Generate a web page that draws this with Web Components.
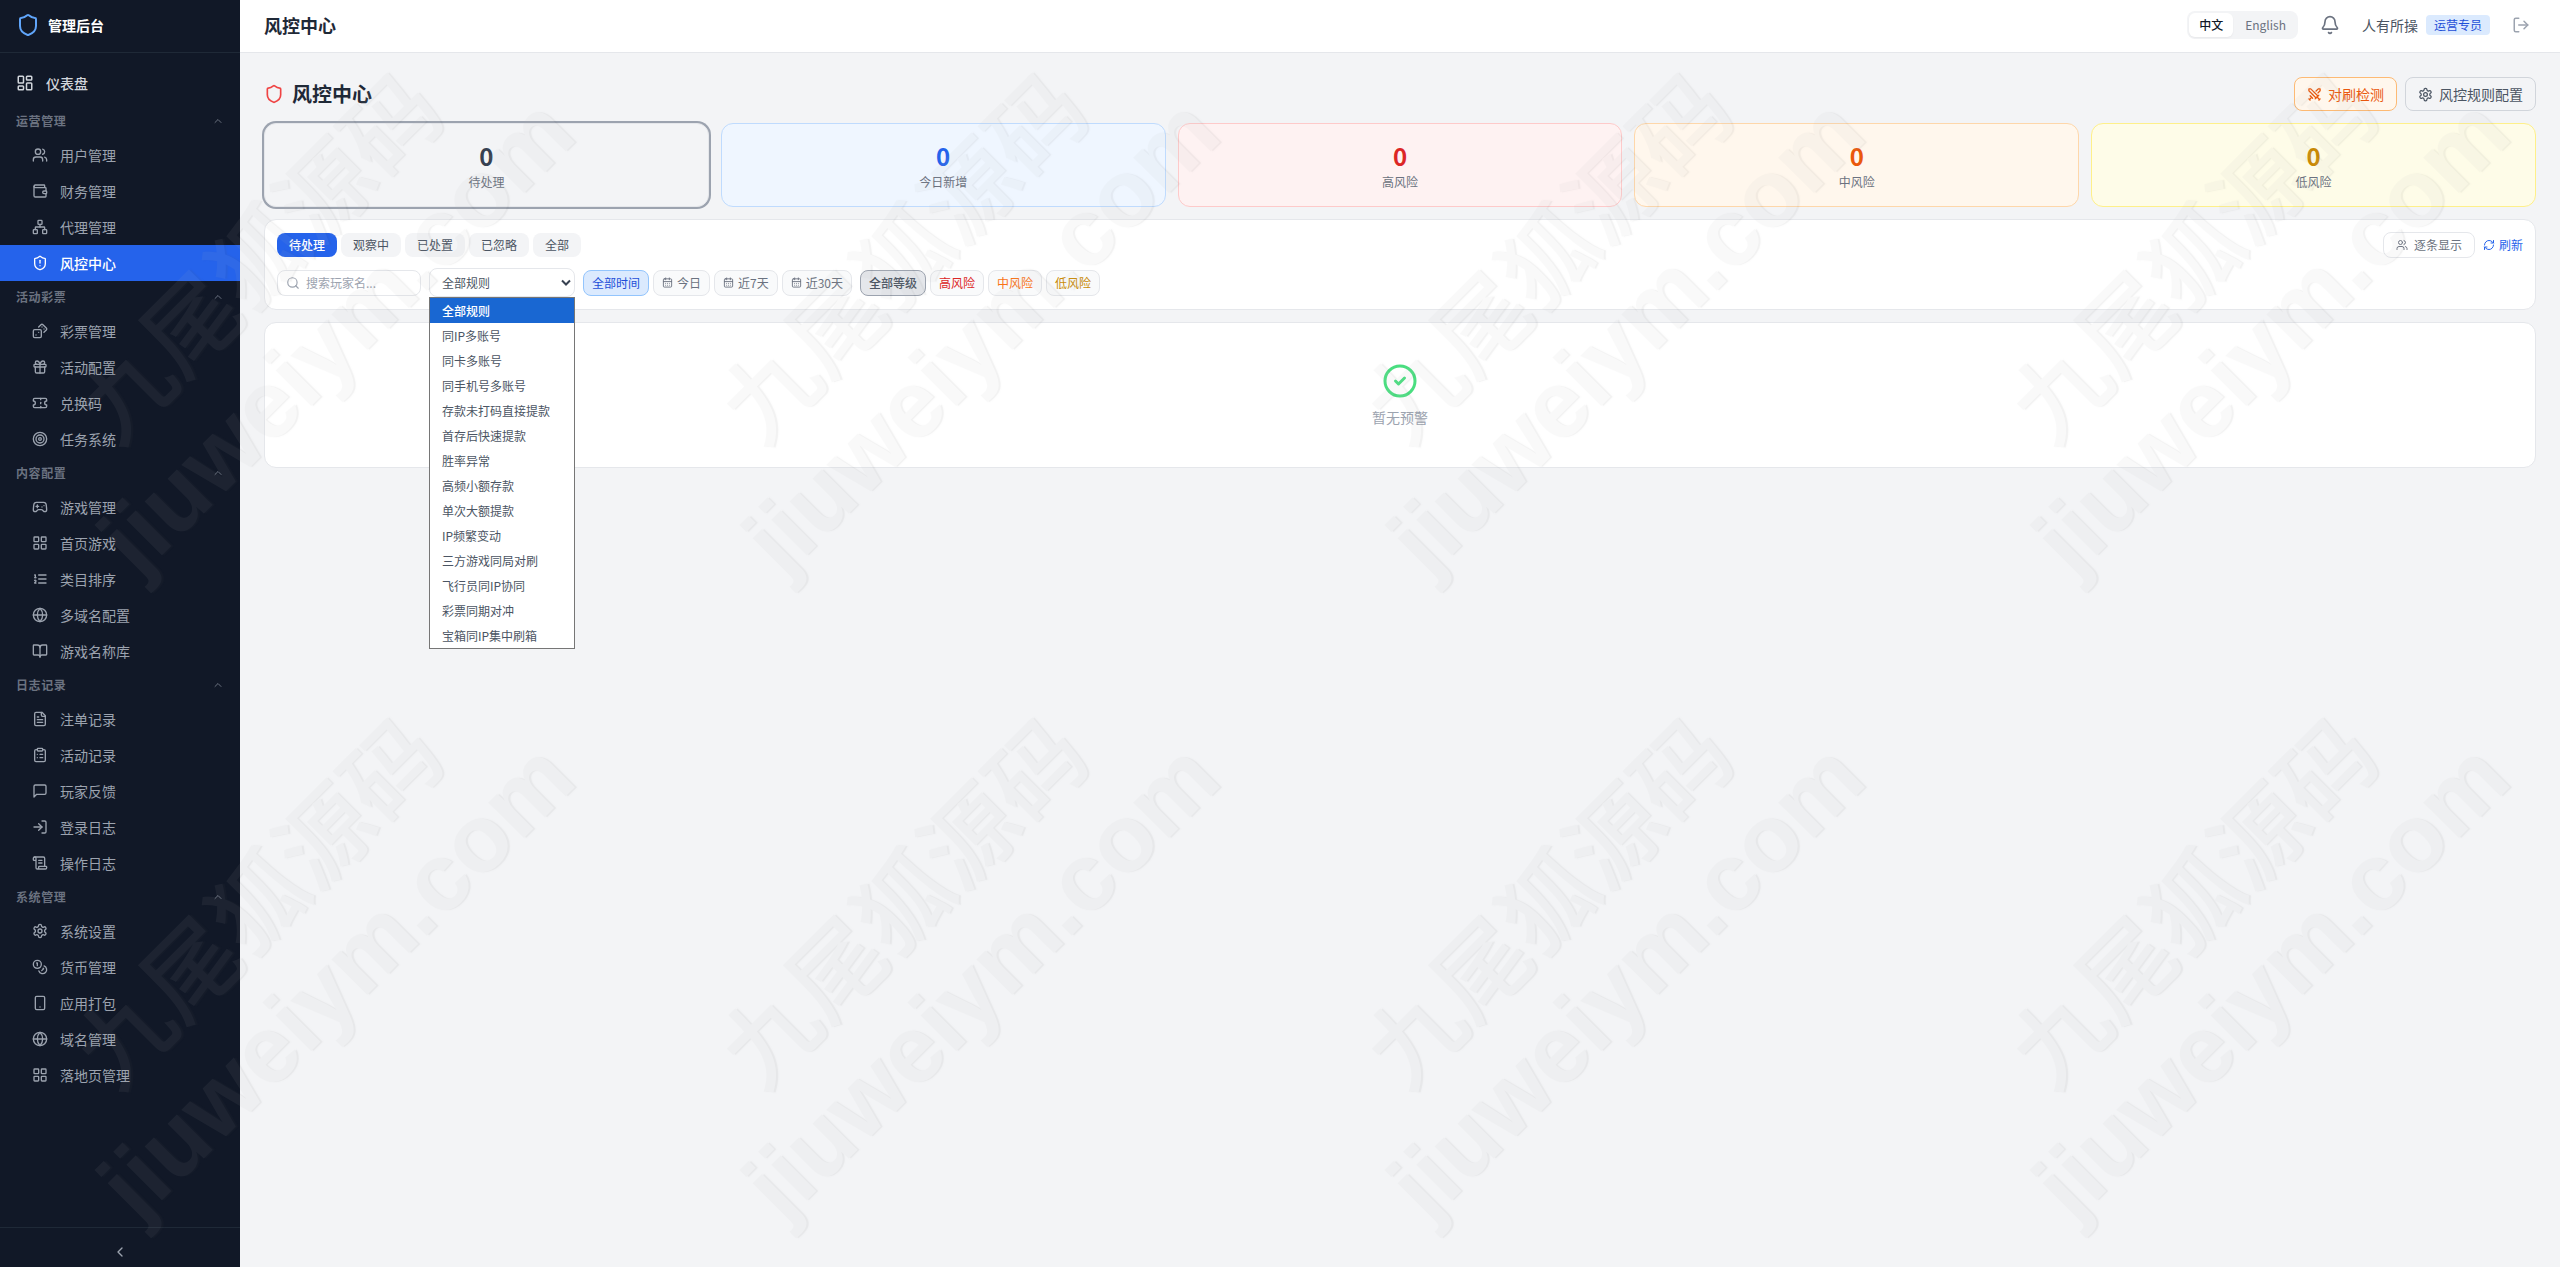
<!DOCTYPE html>
<html lang="zh-CN">
<head>
<meta charset="UTF-8">
<title>风控中心</title>
<style>
  html, body {
    margin: 0;
    height: 100%;
    overflow: hidden;
  }
  body {
    font-family: "Noto Sans CJK SC", sans-serif;
    font-size: 14px;
    line-height: 20px;
    color: #1f2937;
    background: #f3f4f6;
  }
</style>
</head>
<body>
<admin-app></admin-app>

<script>
const ICONS = {
  shield: '<path d="M20 13c0 5-3.5 7.5-7.66 8.95a1 1 0 0 1-.67-.01C7.5 20.5 4 18 4 13V6a1 1 0 0 1 1-1c2 0 4.5-1.2 6.24-2.72a1.17 1.17 0 0 1 1.52 0C14.51 3.81 17 5 19 5a1 1 0 0 1 1 1z"/>',
  shieldAlert: '<path d="M20 13c0 5-3.5 7.5-7.66 8.95a1 1 0 0 1-.67-.01C7.5 20.5 4 18 4 13V6a1 1 0 0 1 1-1c2 0 4.5-1.2 6.24-2.72a1.17 1.17 0 0 1 1.52 0C14.51 3.81 17 5 19 5a1 1 0 0 1 1 1z"/><path d="M12 8v4"/><path d="M12 16h.01"/>',
  dashboard: '<rect width="7" height="9" x="3" y="3" rx="1"/><rect width="7" height="5" x="14" y="3" rx="1"/><rect width="7" height="9" x="14" y="12" rx="1"/><rect width="7" height="5" x="3" y="16" rx="1"/>',
  users: '<path d="M16 21v-2a4 4 0 0 0-4-4H6a4 4 0 0 0-4 4v2"/><circle cx="9" cy="7" r="4"/><path d="M22 21v-2a4 4 0 0 0-3-3.87"/><path d="M16 3.13a4 4 0 0 1 0 7.75"/>',
  wallet: '<path d="M19 7V4a1 1 0 0 0-1-1H5a2 2 0 0 0 0 4h15a1 1 0 0 1 1 1v4h-3a2 2 0 0 0 0 4h3a1 1 0 0 0 1-1v-2a1 1 0 0 0-1-1"/><path d="M3 5v14a2 2 0 0 0 2 2h15a1 1 0 0 0 1-1v-4"/>',
  network: '<rect x="16" y="16" width="6" height="6" rx="1"/><rect x="2" y="16" width="6" height="6" rx="1"/><rect x="9" y="2" width="6" height="6" rx="1"/><path d="M5 16v-3a1 1 0 0 1 1-1h12a1 1 0 0 1 1 1v3"/><path d="M12 12V8"/>',
  dices: '<rect width="12" height="12" x="2" y="10" rx="2" ry="2"/><path d="m17.92 14 3.5-3.5a2.24 2.24 0 0 0 0-3l-5-4.92a2.24 2.24 0 0 0-3 0L10 6"/><path d="M6 18h.01"/><path d="M10 14h.01"/><path d="M15 6h.01"/><path d="M18 9h.01"/>',
  gift: '<rect x="3" y="8" width="18" height="4" rx="1"/><path d="M12 8v13"/><path d="M19 12v7a2 2 0 0 1-2 2H7a2 2 0 0 1-2-2v-7"/><path d="M7.5 8a2.5 2.5 0 0 1 0-5A4.8 8 0 0 1 12 8a4.8 8 0 0 1 4.5-5 2.5 2.5 0 0 1 0 5"/>',
  ticket: '<path d="M2 9a3 3 0 0 1 0 6v2a2 2 0 0 0 2 2h16a2 2 0 0 0 2-2v-2a3 3 0 0 1 0-6V7a2 2 0 0 0-2-2H4a2 2 0 0 0-2 2Z"/><path d="M13 5v2"/><path d="M13 17v2"/><path d="M13 11v2"/>',
  target: '<circle cx="12" cy="12" r="10"/><circle cx="12" cy="12" r="6"/><circle cx="12" cy="12" r="2"/>',
  gamepad: '<path d="M6 11h4"/><path d="M8 9v4"/><path d="M15 12h.01"/><path d="M18 10h.01"/><path d="M17.32 5H6.68a4 4 0 0 0-3.978 3.59c-.006.052-.01.101-.017.152C2.604 9.416 2 14.456 2 16a3 3 0 0 0 3 3c1 0 1.5-.5 2-1l1.414-1.414A2 2 0 0 1 9.828 16h4.344a2 2 0 0 1 1.414.586L17 18c.5.5 1 1 2 1a3 3 0 0 0 3-3c0-1.545-.604-6.584-.685-7.258-.007-.05-.011-.1-.017-.151A4 4 0 0 0 17.32 5z"/>',
  grid: '<rect width="7" height="7" x="3" y="3" rx="1"/><rect width="7" height="7" x="14" y="3" rx="1"/><rect width="7" height="7" x="14" y="14" rx="1"/><rect width="7" height="7" x="3" y="14" rx="1"/>',
  listOrdered: '<path d="M10 12h11"/><path d="M10 18h11"/><path d="M10 6h11"/><path d="M4 10h2"/><path d="M4 6h1v4"/><path d="M6 18H4c0-1 2-2 2-3s-1-1.5-2-1"/>',
  globe: '<circle cx="12" cy="12" r="10"/><path d="M12 2a14.5 14.5 0 0 0 0 20 14.5 14.5 0 0 0 0-20"/><path d="M2 12h20"/>',
  book: '<path d="M12 7v14"/><path d="M3 18a1 1 0 0 1-1-1V4a1 1 0 0 1 1-1h5a4 4 0 0 1 4 4 4 4 0 0 1 4-4h5a1 1 0 0 1 1 1v13a1 1 0 0 1-1 1h-6a3 3 0 0 0-3 3 3 3 0 0 0-3-3z"/>',
  fileText: '<path d="M15 2H6a2 2 0 0 0-2 2v16a2 2 0 0 0 2 2h12a2 2 0 0 0 2-2V7Z"/><path d="M14 2v4a2 2 0 0 0 2 2h4"/><path d="M10 9H8"/><path d="M16 13H8"/><path d="M16 17H8"/>',
  clipboard: '<rect width="8" height="4" x="8" y="2" rx="1" ry="1"/><path d="M16 4h2a2 2 0 0 1 2 2v14a2 2 0 0 1-2 2H6a2 2 0 0 1-2-2V6a2 2 0 0 1 2-2h2"/><path d="M12 11h4"/><path d="M12 16h4"/><path d="M8 11h.01"/><path d="M8 16h.01"/>',
  message: '<path d="M21 15a2 2 0 0 1-2 2H7l-4 4V5a2 2 0 0 1 2-2h14a2 2 0 0 1 2 2z"/>',
  logIn: '<path d="M15 3h4a2 2 0 0 1 2 2v14a2 2 0 0 1-2 2h-4"/><path d="m10 17 5-5-5-5"/><path d="M15 12H3"/>',
  logOut: '<path d="M9 21H5a2 2 0 0 1-2-2V5a2 2 0 0 1 2-2h4"/><path d="m16 17 5-5-5-5"/><path d="M21 12H9"/>',
  scroll: '<path d="M15 12h-5"/><path d="M15 8h-5"/><path d="M19 17V5a2 2 0 0 0-2-2H4"/><path d="M8 21h12a2 2 0 0 0 2-2v-1a1 1 0 0 0-1-1H11a1 1 0 0 0-1 1v1a2 2 0 1 1-4 0V5a2 2 0 1 0-4 0v2a1 1 0 0 0 1 1h3"/>',
  settings: '<path d="M12.22 2h-.44a2 2 0 0 0-2 2v.18a2 2 0 0 1-1 1.73l-.43.25a2 2 0 0 1-2 0l-.15-.08a2 2 0 0 0-2.73.73l-.22.38a2 2 0 0 0 .73 2.73l.15.1a2 2 0 0 1 1 1.72v.51a2 2 0 0 1-1 1.74l-.15.09a2 2 0 0 0-.73 2.73l.22.38a2 2 0 0 0 2.73.73l.15-.08a2 2 0 0 1 2 0l.43.25a2 2 0 0 1 1 1.73V20a2 2 0 0 0 2 2h.44a2 2 0 0 0 2-2v-.18a2 2 0 0 1 1-1.73l.43-.25a2 2 0 0 1 2 0l.15.08a2 2 0 0 0 2.73-.73l.22-.39a2 2 0 0 0-.73-2.73l-.15-.08a2 2 0 0 1-1-1.74v-.5a2 2 0 0 1 1-1.74l.15-.09a2 2 0 0 0 .73-2.73l-.22-.38a2 2 0 0 0-2.73-.73l-.15.08a2 2 0 0 1-2 0l-.43-.25a2 2 0 0 1-1-1.73V4a2 2 0 0 0-2-2z"/><circle cx="12" cy="12" r="3"/>',
  coins: '<circle cx="8" cy="8" r="6"/><path d="M18.09 10.37A6 6 0 1 1 10.34 18"/><path d="M7 6h1v4"/><path d="m16.71 13.88.7.71-2.82 2.82"/>',
  phone: '<rect width="14" height="20" x="5" y="2" rx="2" ry="2"/><path d="M12 18h.01"/>',
  chevronUp: '<path d="m18 15-6-6-6 6"/>',
  chevronLeft: '<path d="m15 18-6-6 6-6"/>',
  bell: '<path d="M10.268 21a2 2 0 0 0 3.464 0"/><path d="M3.262 15.326A1 1 0 0 0 4 17h16a1 1 0 0 0 .74-1.673C19.41 13.956 18 12.499 18 8A6 6 0 0 0 6 8c0 4.499-1.411 5.956-2.738 7.326"/>',
  swords: '<polyline points="14.5 17.5 3 6 3 3 6 3 17.5 14.5"/><line x1="13" x2="19" y1="19" y2="13"/><line x1="16" x2="20" y1="16" y2="20"/><line x1="19" x2="21" y1="21" y2="19"/><polyline points="14.5 6.5 18 3 21 3 21 6 17.5 9.5"/><line x1="5" x2="9" y1="14" y2="18"/><line x1="7" x2="4" y1="17" y2="20"/><line x1="3" x2="5" y1="19" y2="21"/>',
  search: '<circle cx="11" cy="11" r="8"/><path d="m21 21-4.3-4.3"/>',
  calendar: '<path d="M8 2v4"/><path d="M16 2v4"/><rect width="18" height="18" x="3" y="4" rx="2"/><path d="M3 10h18"/><path d="M8 14h.01"/><path d="M12 14h.01"/><path d="M16 14h.01"/><path d="M8 18h.01"/><path d="M12 18h.01"/><path d="M16 18h.01"/>',
  refresh: '<path d="M3 12a9 9 0 0 1 9-9 9.75 9.75 0 0 1 6.74 2.74L21 8"/><path d="M21 3v5h-5"/><path d="M21 12a9 9 0 0 1-9 9 9.75 9.75 0 0 1-6.74-2.74L3 16"/><path d="M8 16H3v5"/>',
  circleCheck: '<circle cx="12" cy="12" r="10"/><path d="m9 12 2 2 4-4"/>',
};

class UiIcon extends HTMLElement {
  constructor() {
    super();
    this.attachShadow({ mode: 'open' });
  }

  connectedCallback() {
    const size = this.getAttribute('size') || 16;
    this.shadowRoot.innerHTML = `
      <style>
        :host { display: block; flex: none; width: ${size}px; height: ${size}px; }
        svg { display: block; }
      </style>
      <svg width="${size}" height="${size}" viewBox="0 0 24 24" fill="none" stroke="currentColor"
        stroke-width="2" stroke-linecap="round" stroke-linejoin="round">${ICONS[this.getAttribute('name')]}</svg>
    `;
  }
}
customElements.define('ui-icon', UiIcon);

// Most elements only need their markup cloned into a shadow root
function define(name, html) {
  const template = document.createElement('template');
  template.innerHTML = html;
  customElements.define(name, class extends HTMLElement {
    constructor() {
      super();
      this.attachShadow({ mode: 'open' });
      this.shadowRoot.appendChild(template.content.cloneNode(true));
    }
  });
}

class NavItem extends HTMLElement {
  constructor() {
    super();
    this.attachShadow({ mode: 'open' });
  }

  connectedCallback() {
    this.shadowRoot.innerHTML = `
      <style>
        :host {
          display: flex;
          align-items: center;
          gap: 12px;
          padding: 8px 16px 8px 32px;
          color: #9ca3af;
        }
        :host([top]) { padding: 12px 16px; color: #d1d5db; font-weight: 500; }
        :host([active]) { background: #2563eb; color: #fff; font-weight: 500; }
      </style>
      <ui-icon name="${this.getAttribute('icon')}" size="${this.hasAttribute('top') ? 18 : 16}"></ui-icon>
      <slot></slot>
    `;
  }
}
customElements.define('nav-item', NavItem);

class NavGroup extends HTMLElement {
  constructor() {
    super();
    this.attachShadow({ mode: 'open' });
  }

  connectedCallback() {
    this.shadowRoot.innerHTML = `
      <style>
        :host { display: block; }
        .title {
          display: flex;
          align-items: center;
          justify-content: space-between;
          padding: 8px 16px;
          font-size: 12px;
          line-height: 16px;
          font-weight: 600;
          letter-spacing: 0.05em;
          color: #6b7280;
        }
      </style>
      <div class="title"><span>${this.getAttribute('label')}</span><ui-icon name="chevronUp" size="12"></ui-icon></div>
      <slot></slot>
    `;
  }
}
customElements.define('nav-group', NavGroup);

define('side-bar', `
  <style>
    :host {
      display: flex;
      flex-direction: column;
      width: 240px;
      flex: none;
      background: #111827;
    }
    .brand {
      display: flex;
      align-items: center;
      gap: 8px;
      height: 50px;
      padding: 0 16px 2px;
      border-bottom: 1px solid #1f2937;
      color: #fff;
      font-weight: 700;
    }
    .brand ui-icon { color: #60a5fa; }
    nav { flex: 1; padding-top: 8px; }
    footer {
      display: flex;
      justify-content: center;
      padding: 16px 0 7px;
      border-top: 1px solid #1f2937;
      color: #9ca3af;
    }
  </style>
  <div class="brand"><ui-icon name="shield" size="24"></ui-icon><span>管理后台</span></div>
  <nav>
    <nav-item top icon="dashboard">仪表盘</nav-item>
    <nav-group label="运营管理">
      <nav-item icon="users">用户管理</nav-item>
      <nav-item icon="wallet">财务管理</nav-item>
      <nav-item icon="network">代理管理</nav-item>
      <nav-item icon="shieldAlert" active>风控中心</nav-item>
    </nav-group>
    <nav-group label="活动彩票">
      <nav-item icon="dices">彩票管理</nav-item>
      <nav-item icon="gift">活动配置</nav-item>
      <nav-item icon="ticket">兑换码</nav-item>
      <nav-item icon="target">任务系统</nav-item>
    </nav-group>
    <nav-group label="内容配置">
      <nav-item icon="gamepad">游戏管理</nav-item>
      <nav-item icon="grid">首页游戏</nav-item>
      <nav-item icon="listOrdered">类目排序</nav-item>
      <nav-item icon="globe">多域名配置</nav-item>
      <nav-item icon="book">游戏名称库</nav-item>
    </nav-group>
    <nav-group label="日志记录">
      <nav-item icon="fileText">注单记录</nav-item>
      <nav-item icon="clipboard">活动记录</nav-item>
      <nav-item icon="message">玩家反馈</nav-item>
      <nav-item icon="logIn">登录日志</nav-item>
      <nav-item icon="scroll">操作日志</nav-item>
    </nav-group>
    <nav-group label="系统管理">
      <nav-item icon="settings">系统设置</nav-item>
      <nav-item icon="coins">货币管理</nav-item>
      <nav-item icon="phone">应用打包</nav-item>
      <nav-item icon="globe">域名管理</nav-item>
      <nav-item icon="grid">落地页管理</nav-item>
    </nav-group>
  </nav>
  <footer><ui-icon name="chevronLeft" size="16"></ui-icon></footer>
`);

define('top-bar', `
  <style>
    :host {
      display: flex;
      align-items: center;
      justify-content: space-between;
      height: 50px;
      padding: 0 24px 2px;
      background: #fff;
      border-bottom: 1px solid #e5e7eb;
    }
    h2 { margin: 0; font-size: 18px; line-height: 28px; font-weight: 600; }
    .right, .user { display: flex; align-items: center; }
    .right { gap: 16px; }
    .user { gap: 8px; color: #4b5563; }
    .lang {
      display: flex;
      gap: 2px;
      padding: 2px;
      border-radius: 8px;
      background: #f3f4f6;
      font-size: 12px;
      line-height: 16px;
      color: #6b7280;
    }
    .lang span { padding: 4px 10px; border-radius: 6px; }
    .lang .on {
      background: #fff;
      color: #111827;
      font-weight: 500;
      box-shadow: 0 1px 2px rgba(0, 0, 0, .05);
    }
    .btn { padding: 6px; color: #6b7280; }
    .btn.out { color: #9ca3af; }
    .role {
      padding: 2px 8px;
      border-radius: 4px;
      background: #dbeafe;
      color: #1d4ed8;
      font-size: 12px;
      line-height: 16px;
    }
  </style>
  <h2>风控中心</h2>
  <div class="right">
    <div class="lang"><span class="on">中文</span><span>English</span></div>
    <div class="btn"><ui-icon name="bell" size="20"></ui-icon></div>
    <div class="user"><span>人有所操</span><span class="role">运营专员</span></div>
    <div class="btn out"><ui-icon name="logOut" size="18"></ui-icon></div>
  </div>
`);

define('stat-card', `
  <style>
    :host {
      display: block;
      padding: 16px;
      border: 1px solid var(--line);
      border-radius: 12px;
      background: var(--bg);
      text-align: center;
    }
    :host([selected]) { box-shadow: 0 0 0 2px #9ca3af; }
    .num { font-size: 24px; line-height: 32px; font-weight: 700; color: var(--fg); }
    .label { margin-top: 2px; font-size: 12px; line-height: 16px; color: #6b7280; }
  </style>
  <div class="num"><slot name="value"></slot></div>
  <div class="label"><slot></slot></div>
`);

define('tab-pill', `
  <style>
    :host {
      display: block;
      padding: 4px 12px;
      border-radius: 8px;
      background: #f3f4f6;
      color: #4b5563;
      font-size: 12px;
      line-height: 16px;
    }
    :host([active]) { background: #2563eb; color: #fff; font-weight: 500; }
  </style>
  <slot></slot>
`);

define('filter-chip', `
  <style>
    :host {
      display: flex;
      align-items: center;
      gap: 4px;
      padding: 4px 8px;
      border: 1px solid #e5e7eb;
      border-radius: 8px;
      background: #f9fafb;
      color: #6b7280;
      font-size: 12px;
      line-height: 16px;
    }
    :host([tone="blue"]) { background: #dbeafe; border-color: #93c5fd; color: #1d4ed8; }
    :host([tone="gray"]) { background: #e5e7eb; border-color: #9ca3af; color: #4b5563; font-weight: 500; }
    :host([tone="red"]) { color: #dc2626; }
    :host([tone="orange"]) { color: #f97316; }
    :host([tone="yellow"]) { color: #ca8a04; }
  </style>
  <slot></slot>
`);

class RuleSelect extends HTMLElement {
  constructor() {
    super();
    this.attachShadow({ mode: 'open' });
  }

  connectedCallback() {
    const options = this.getAttribute('options').split(',');
    this.shadowRoot.innerHTML = `
      <style>
        :host {
          position: relative;
          display: block;
          box-sizing: border-box;
          width: 146px;
          height: 29px;
          font-size: 12px;
          line-height: 27px;
          color: #4b5563;
          border: 1px solid #e5e7eb;
          border-radius: 8px;
          background: #fff;
        }
        .field { display: flex; align-items: center; justify-content: space-between; padding: 0 3px 0 12px; }
        .list {
          position: absolute;
          z-index: 5;
          top: 28px;
          left: -1px;
          width: 144px;
          border: 1px solid #767676;
          background: #fff;
        }
        .option { height: 25px; line-height: 25px; padding-left: 12px; }
        .option.on { background: #1967d2; color: #fff; font-weight: 500; }
      </style>
      <div class="field">
        <span>${options[0]}</span>
        <svg width="10" height="8" viewBox="0 0 10 8" fill="none" stroke="#374151" stroke-width="2"><path d="M1 1.5 5 5.5 9 1.5"/></svg>
      </div>
      <div class="list">
        ${options.map((o, i) => `<div class="option${i === 0 ? ' on' : ''}">${o}</div>`).join('')}
      </div>
    `;
  }
}
customElements.define('rule-select', RuleSelect);

define('filter-panel', `
  <style>
    :host {
      display: flex;
      flex-direction: column;
      gap: 10px;
      padding: 12px;
      border: 1px solid #e5e7eb;
      border-radius: 12px;
      background: #fff;
      font-size: 12px;
      line-height: 16px;
    }
    .row, .set, .tools, .refresh, .mode, .search { display: flex; align-items: center; }
    .row { gap: 8px; }
    .between { justify-content: space-between; }
    .set { gap: 4px; }
    .tools { gap: 8px; }
    .mode {
      gap: 6px;
      padding: 4px 12px;
      border: 1px solid #e5e7eb;
      border-radius: 8px;
      color: #6b7280;
    }
    .refresh { gap: 4px; color: #2563eb; }
    .search {
      box-sizing: border-box;
      width: 144px;
      gap: 6px;
      padding: 4px 8px;
      border: 1px solid #e5e7eb;
      border-radius: 8px;
      color: #9ca3af;
    }
  </style>
  <div class="row between">
    <div class="set">
      <tab-pill active>待处理</tab-pill>
      <tab-pill>观察中</tab-pill>
      <tab-pill>已处置</tab-pill>
      <tab-pill>已忽略</tab-pill>
      <tab-pill>全部</tab-pill>
    </div>
    <div class="tools">
      <div class="mode"><ui-icon name="users" size="12"></ui-icon><span>逐条显示</span></div>
      <div class="refresh"><ui-icon name="refresh" size="12"></ui-icon><span>刷新</span></div>
    </div>
  </div>
  <div class="row">
    <div class="search"><ui-icon name="search" size="14"></ui-icon><span>搜索玩家名...</span></div>
    <rule-select options="全部规则,同IP多账号,同卡多账号,同手机号多账号,存款未打码直接提款,首存后快速提款,胜率异常,高频小额存款,单次大额提款,IP频繁变动,三方游戏同局对刷,飞行员同IP协同,彩票同期对冲,宝箱同IP集中刷箱"></rule-select>
    <div class="set">
      <filter-chip tone="blue">全部时间</filter-chip>
      <filter-chip><ui-icon name="calendar" size="11"></ui-icon><span>今日</span></filter-chip>
      <filter-chip><ui-icon name="calendar" size="11"></ui-icon><span>近7天</span></filter-chip>
      <filter-chip><ui-icon name="calendar" size="11"></ui-icon><span>近30天</span></filter-chip>
    </div>
    <div class="set">
      <filter-chip tone="gray">全部等级</filter-chip>
      <filter-chip tone="red">高风险</filter-chip>
      <filter-chip tone="orange">中风险</filter-chip>
      <filter-chip tone="yellow">低风险</filter-chip>
    </div>
  </div>
`);

define('empty-state', `
  <style>
    :host {
      display: flex;
      flex-direction: column;
      align-items: center;
      gap: 8px;
      padding: 40px;
      border: 1px solid #e5e7eb;
      border-radius: 12px;
      background: #fff;
      color: #9ca3af;
    }
    ui-icon { color: #4ade80; }
  </style>
  <ui-icon name="circleCheck" size="36"></ui-icon>
  <slot></slot>
`);

define('risk-page', `
  <style>
    :host { display: flex; flex-direction: column; gap: 12px; padding: 24px; }
    .head, .title, .actions, .action { display: flex; align-items: center; }
    .head { justify-content: space-between; }
    .title, .actions { gap: 8px; }
    .title ui-icon { color: #ef4444; }
    h1 { margin: 0; font-size: 20px; line-height: 28px; font-weight: 700; }
    .action {
      gap: 6px;
      padding: 6px 12px;
      border: 1px solid #d1d5db;
      border-radius: 8px;
      color: #4b5563;
    }
    .action.warn { background: #fff7ed; border-color: #fdba74; color: #ea580c; }
    .stats { display: grid; grid-template-columns: repeat(5, 1fr); gap: 12px; }
    .gray { --bg: #f3f4f6; --line: #e5e7eb; --fg: #374151; }
    .blue { --bg: #eff6ff; --line: #bfdbfe; --fg: #2563eb; }
    .red { --bg: #fef2f2; --line: #fecaca; --fg: #dc2626; }
    .orange { --bg: #fff7ed; --line: #fed7aa; --fg: #ea580c; }
    .yellow { --bg: #fefce8; --line: #fef08a; --fg: #ca8a04; }
  </style>
  <div class="head">
    <div class="title"><ui-icon name="shield" size="20"></ui-icon><h1>风控中心</h1></div>
    <div class="actions">
      <div class="action warn"><ui-icon name="swords" size="15"></ui-icon><span>对刷检测</span></div>
      <div class="action"><ui-icon name="settings" size="15"></ui-icon><span>风控规则配置</span></div>
    </div>
  </div>
  <div class="stats">
    <stat-card class="gray" selected><span slot="value">0</span>待处理</stat-card>
    <stat-card class="blue"><span slot="value">0</span>今日新增</stat-card>
    <stat-card class="red"><span slot="value">0</span>高风险</stat-card>
    <stat-card class="orange"><span slot="value">0</span>中风险</stat-card>
    <stat-card class="yellow"><span slot="value">0</span>低风险</stat-card>
  </div>
  <filter-panel></filter-panel>
  <empty-state>暂无预警</empty-state>
`);

// Watermark laid over the whole window, one stamp per 645px tile
class WaterMark extends HTMLElement {
  constructor() {
    super();
    this.attachShadow({ mode: 'open' });
  }

  connectedCallback() {
    const stamp = '<div class="tile"><div class="stamp"><div class="cn">九尾狐源码</div><div class="en">jiuweiym.com</div></div></div>';
    this.shadowRoot.innerHTML = `
      <style>
        :host {
          position: absolute;
          inset: 0;
          z-index: 10;
          overflow: hidden;
          pointer-events: none;
        }
        .sheet {
          display: grid;
          grid-template-columns: repeat(4, 645px);
          grid-auto-rows: 645px;
          width: 2580px;
          margin: -29px 0 0 -28px;
        }
        .tile { display: flex; align-items: center; justify-content: center; }
        /* opacity on the group keeps the shadow from darkening the letters */
        .stamp {
          transform: rotate(-45deg);
          opacity: .07;
          text-align: center;
          white-space: nowrap;
          font-size: 95px;
          line-height: 116px;
          font-weight: 700;
          color: #b8b8b8;
          text-shadow: 1.5px 1.5px 1px #505050;
        }
        .cn { font-size: 94px; font-weight: 500; }
        .en { font-family: "Liberation Sans", sans-serif; }
      </style>
      <div class="sheet">${stamp.repeat(8)}</div>
    `;
  }
}
customElements.define('water-mark', WaterMark);

define('admin-app', `
  <style>
    :host { position: relative; display: flex; height: 100vh; overflow: hidden; }
    main { flex: 1; min-width: 0; background: #f3f4f6; }
  </style>
  <side-bar></side-bar>
  <main>
    <top-bar></top-bar>
    <risk-page></risk-page>
  </main>
  <water-mark></water-mark>
`);
</script>
</body>
</html>
